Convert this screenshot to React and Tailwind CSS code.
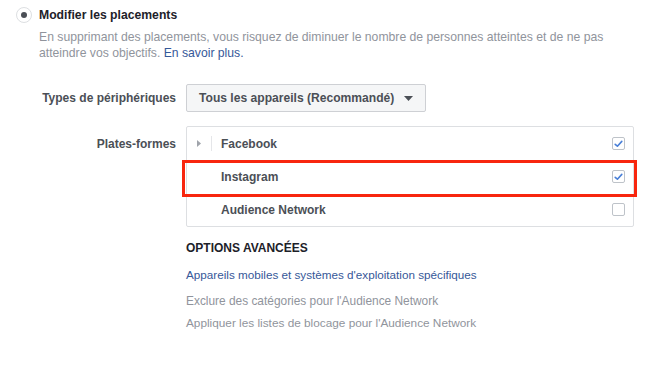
import React from "react";

function Check({ checked }) {
  return (
    <div className="w-[13px] h-[13px] rounded-[2px] border border-[#bec3c9] bg-white flex items-center justify-center">
      {checked && (
        <svg width="9" height="8" viewBox="0 0 9 8">
          <path d="M1.2 4.3 L3.4 6.2 L7.8 1.4" fill="none" stroke="#4a80d8" strokeWidth="1.6" strokeLinecap="round" strokeLinejoin="round" />
        </svg>
      )}
    </div>
  );
}

export default function App() {
  return (
    <div className="relative w-[653px] h-[370px] bg-white text-[12px] overflow-hidden" style={{ fontFamily: '"Liberation Sans", Arial, sans-serif' }}>
      <div className="flex items-center pl-[16px] pt-[7px] h-[23px]">
        <div className="w-[16px] h-[16px] rounded-full border border-[#dddfe2] bg-white flex items-center justify-center">
          <div className="w-[6px] h-[6px] rounded-full bg-[#4b4f56]" />
        </div>
        <span className="ml-[7px] text-[12.2px] font-bold text-[#1d2129] leading-[16px]">Modifier les placements</span>
      </div>
      <div className="pl-[39px] mt-[7px] text-[#90949c] text-[12.2px] leading-[15.5px] w-[625px]">
        En supprimant des placements, vous risquez de diminuer le nombre de personnes atteintes et de ne pas atteindre vos objectifs.{" "}
        <span className="text-[#365899]">En savoir plus.</span>
      </div>

      <div className="flex items-center mt-[23px]">
        <div className="w-[176px] text-right font-bold text-[#4b4f56]">Types de périphériques</div>
        <div className="ml-[10px] w-[240px] h-[28px] rounded-[2px] border border-[#ced0d4] bg-[#f5f6f7] flex items-center pl-[12px] font-bold text-[#4b4f56]">
          <span className="text-[12.1px]">Tous les appareils (Recommandé)</span>
          <svg className="ml-[10px]" width="9" height="5" viewBox="0 0 9 5">
            <path d="M0 0 L9 0 L4.5 5 Z" fill="#4b4f56" />
          </svg>
        </div>
      </div>

      <div className="flex mt-[14px]">
        <div className="w-[176px] text-right font-bold text-[#4b4f56] pt-[9px]">Plates-formes</div>
        <div className="ml-[10px] w-[448px] border border-[#dddfe2] rounded-[2px]">
          <div className="h-[33px] flex items-center font-bold text-[#4b4f56]">
            <svg className="ml-[10px]" width="4" height="7" viewBox="0 0 4 7">
              <path d="M0 0 L4 3.5 L0 7 Z" fill="#a0a4ab" />
            </svg>
            <div className="ml-[10px] w-px h-[15px] bg-[#e5e6e9]" />
            <span className="ml-[9px] flex-1">Facebook</span>
            <div className="mr-[8px]"><Check checked /></div>
          </div>
          <div className="h-[33px] flex items-center font-bold text-[#4b4f56]">
            <span className="ml-[34px] flex-1">Instagram</span>
            <div className="mr-[8px]"><Check checked /></div>
          </div>
          <div className="h-[33px] flex items-center font-bold text-[#4b4f56]">
            <span className="ml-[34px] flex-1">Audience Network</span>
            <div className="mr-[8px]"><Check /></div>
          </div>
        </div>
      </div>

      <div className="pl-[186px] mt-[14px] leading-[15px]">
        <div className="font-bold text-[#1d2129]">OPTIONS AVANCÉES</div>
        <div className="mt-[11px] text-[#365899] text-[11.7px]">Appareils mobiles et systèmes d'exploitation spécifiques</div>
        <div className="mt-[12px] text-[#90949c] text-[11.9px]">Exclure des catégories pour l'Audience Network</div>
        <div className="mt-[7px] text-[#90949c] text-[11.8px]">Appliquer les listes de blocage pour l'Audience Network</div>
      </div>

      <div className="absolute left-[182px] top-[160px] w-[455px] h-[37px] border-[3px] border-[#f8260e]" />
    </div>
  );
}
